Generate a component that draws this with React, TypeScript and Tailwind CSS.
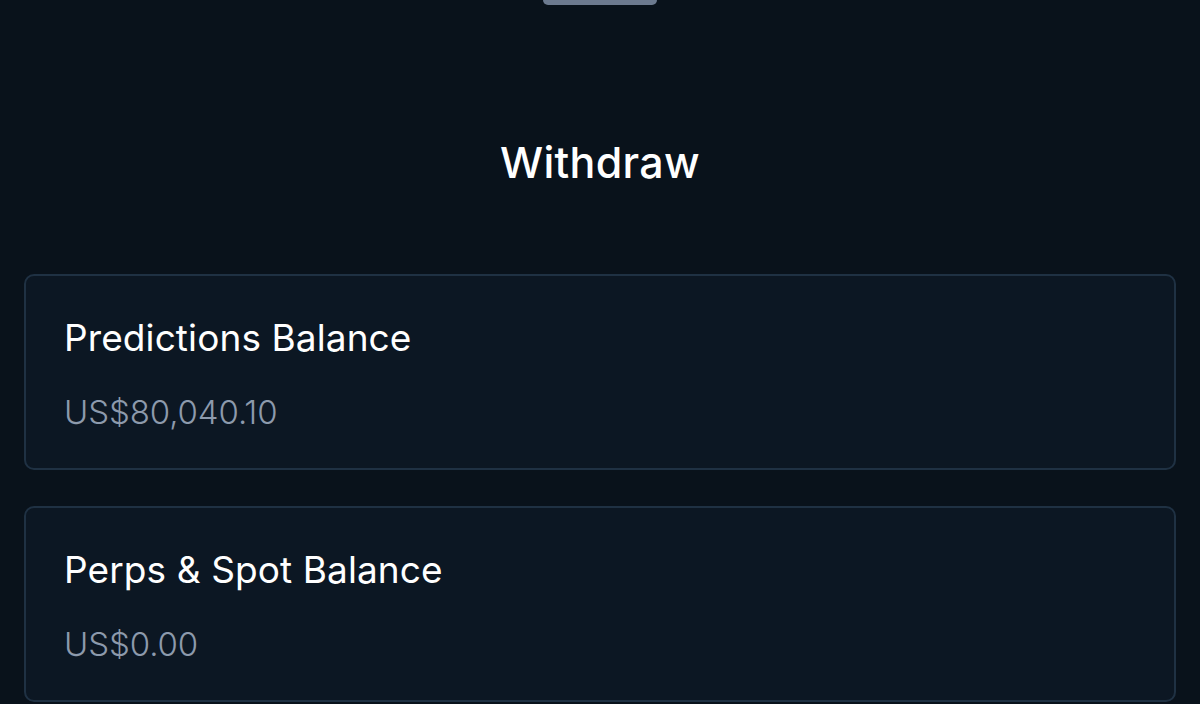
export default function App() {
  return (
    <div className="h-[704px] w-[1200px] overflow-hidden bg-[#09121b] text-white" style={{ fontFamily: 'Inter, "Noto Sans", sans-serif' }}>
      <div className="flex justify-center">
        <div className="h-[5px] w-[114px] rounded-b-[6px] bg-[#6c7a8f]" />
      </div>
      <h1 className="mt-[133px] text-center text-[43px] font-medium leading-[48px] tracking-[0.3px]">Withdraw</h1>
      <div className="mt-[88px] flex flex-col gap-[36px] px-[24px]">
        <div className="h-[196px] rounded-[10px] border-2 border-[#1f3143] bg-[#0c1723] px-[38px] pt-[40px]">
          <div className="text-[37px] leading-[44px] tracking-[0.1px] text-white">Predictions Balance</div>
          <div className="mt-[32px] text-[33px] font-light leading-[40px] tracking-[-0.1px] text-[#8d9aac]">US$80,040.10</div>
        </div>
        <div className="h-[196px] rounded-[10px] border-2 border-[#1f3143] bg-[#0c1723] px-[38px] pt-[40px]">
          <div className="text-[37px] leading-[44px] tracking-[0.1px] text-white">Perps &amp; Spot Balance</div>
          <div className="mt-[32px] text-[33px] font-light leading-[40px] tracking-[-0.1px] text-[#8d9aac]">US$0.00</div>
        </div>
      </div>
    </div>
  );
}
